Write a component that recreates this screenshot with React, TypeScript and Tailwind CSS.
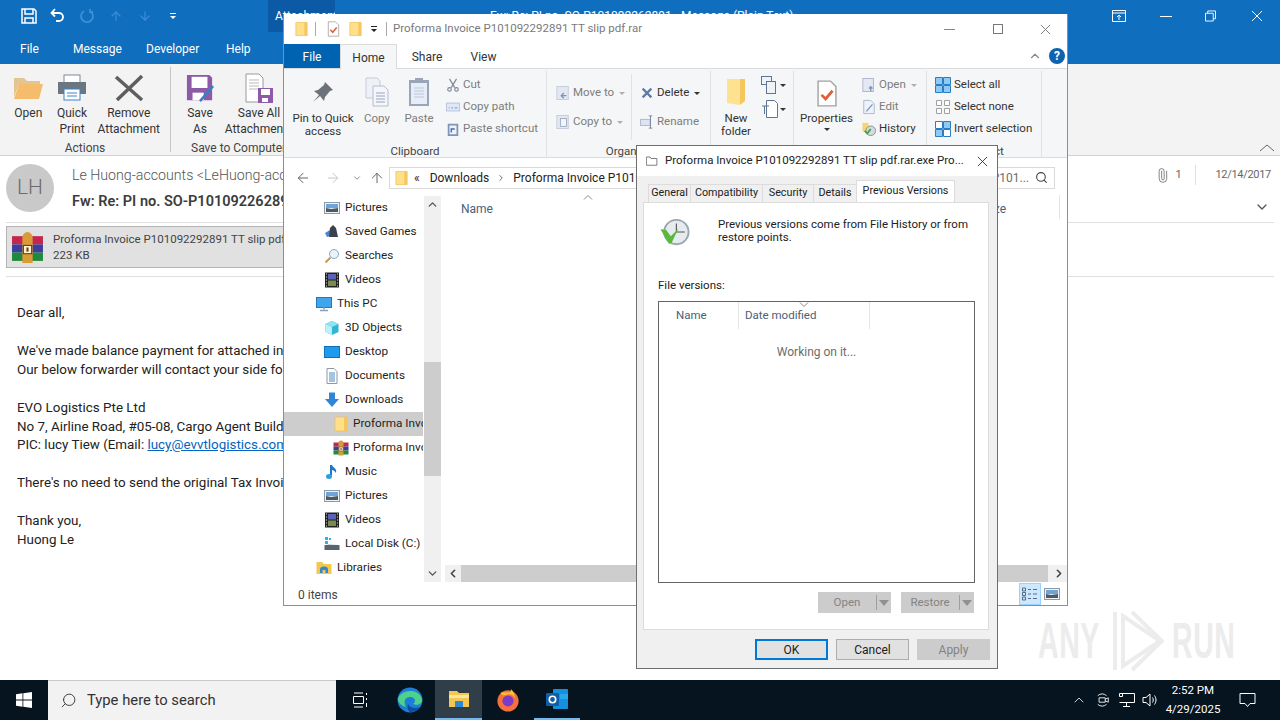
import type { ReactNode } from 'react';
import { ArrowLeft, ArrowRight, ArrowUp, ChevronDown, ChevronLeft, ChevronRight, ChevronUp, Paperclip, Search } from 'lucide-react';

const FolderIcon = ({ className = 'w-4 h-4' }: { className?: string }) => (
    <svg viewBox="0 0 16 16" className={className}>
        <path d="M2 1h12v14H2z" fill="#ffdf8a" stroke="#eec35c" strokeWidth="0.8" />
        <path d="M11 1h3v14h-3z" fill="#f5c85f" />
    </svg>
);

const CheckDoc = ({ className = 'w-4 h-4' }: { className?: string }) => (
    <svg viewBox="0 0 16 20" className={className}>
        <path d="M1.5 1h9l4 4v14h-13z" fill="#fff" stroke="#a0a0a0" />
        <path d="M4 11l3 3 5-6" fill="none" stroke="#e0603a" strokeWidth="2" />
    </svg>
);

const RarIcon = ({ className = 'w-4 h-4' }: { className?: string }) => (
    <svg viewBox="0 0 32 32" className={className}>
        <rect x="1" y="5" width="30" height="8" fill="#c4264e" />
        <rect x="1" y="13" width="30" height="8" fill="#3a3f9e" />
        <rect x="1" y="21" width="30" height="8" fill="#1f8a3c" />
        <path d="M11 7a5 6 0 0110 0v24H11z" fill="#d99a38" />
        <rect x="12" y="14" width="8" height="8" fill="#fff3d0" stroke="#6a3a10" />
        <rect x="15" y="16" width="2" height="4" fill="#6a3a10" />
    </svg>
);

const PicturesIcon = () => (
    <svg viewBox="0 0 16 16" className="w-4 h-4">
        <rect x="0.5" y="2.5" width="15" height="11" fill="#eef3f8" stroke="#8c9aa8" />
        <rect x="2" y="4" width="12" height="4" fill="#6fa4d8" />
        <path d="M2 8l5 1 7-1v4H2z" fill="#4d5a66" />
    </svg>
);

const VideosIcon = () => (
    <svg viewBox="0 0 16 16" className="w-4 h-4">
        <rect x="1" y="0.5" width="14" height="15" fill="#222" />
        <rect x="4" y="2" width="8" height="5.5" fill="#5a62b8" />
        <rect x="4" y="8.5" width="8" height="5.5" fill="#7a8a50" />
        <path d="M2 2h1M2 5h1M2 8h1M2 11h1M2 14h1M13 2h1M13 5h1M13 8h1M13 11h1M13 14h1" stroke="#ddd" />
    </svg>
);

const SavedGamesIcon = () => (
    <svg viewBox="0 0 16 16" className="w-4 h-4">
        <path d="M1 9l5-3v6l-3 1z" fill="#4d86d0" />
        <path d="M6 4l3-3 3 3 2 9H5z" fill="#3a4250" />
    </svg>
);

const SearchesIcon = () => (
    <svg viewBox="0 0 16 16" className="w-4 h-4">
        <circle cx="10" cy="6" r="4.5" fill="#eaf3fb" stroke="#8aa8c4" />
        <path d="M6.5 9.5L1.5 14.5" stroke="#c09a60" strokeWidth="2" />
    </svg>
);

const ThisPcIcon = () => (
    <svg viewBox="0 0 16 16" className="w-4 h-4">
        <rect x="0.5" y="1.5" width="15" height="10" fill="#3fa6ee" stroke="#2179c0" />
        <path d="M4 14.5h8" stroke="#8aa0b0" strokeWidth="1.5" />
        <path d="M7 11.5h2v2H7z" fill="#9ab" />
    </svg>
);

const ObjectsIcon = () => (
    <svg viewBox="0 0 16 16" className="w-4 h-4">
        <path d="M8 1l6.5 3v8L8 15l-6.5-3V4z" fill="#2fb5d6" />
        <path d="M8 1l6.5 3L8 7 1.500 4z" fill="#8ae6f2" />
        <path d="M1.500 4L8 7v8l-6.500-3z" fill="#bdf0f6" />
    </svg>
);

const DesktopIcon = () => (
    <svg viewBox="0 0 16 16" className="w-4 h-4">
        <rect x="0.5" y="2.500" width="15" height="11" fill="#1c9bef" stroke="#116fb8" />
    </svg>
);

const DocumentsIcon = () => (
    <svg viewBox="0 0 16 16" className="w-4 h-4">
        <path d="M3 0.500h7l3 3v12H3z" fill="#fff" stroke="#8a9aa8" />
        <path d="M5 5h6M5 7h6M5 9h6M5 11h6M5 13h6" stroke="#4b88c4" />
    </svg>
);

const DownloadsIcon = () => (
    <svg viewBox="0 0 16 16" className="w-4 h-4">
        <path d="M5 0.500h6V7h4l-7 8-7-8h4z" fill="#2f86d6" />
    </svg>
);

const MusicIcon = () => (
    <svg viewBox="0 0 16 16" className="w-4 h-4">
        <path d="M7 1v10.500" stroke="#2277c8" strokeWidth="2" />
        <ellipse cx="5" cy="12.500" rx="3" ry="2.500" fill="#2aa0e0" />
        <path d="M8 1c1 3 5 3 4 8-1-2-3-3-4-3z" fill="#2277c8" />
    </svg>
);

const DiskIcon = () => (
    <svg viewBox="0 0 16 16" className="w-4 h-4">
        <rect x="0.500" y="9" width="15" height="5" fill="#5a6470" />
        <path d="M1 1h3v3H1zM5 2h2v2H5zM1 5h3v3H1z" fill="#29b3e8" />
        <path d="M5 8l9 1H2z" fill="#c9d2d8" />
    </svg>
);

const LibrariesIcon = () => (
    <svg viewBox="0 0 16 16" className="w-4 h-4">
        <path d="M0.500 2h6l1 2h8v10H0.500z" fill="#f3c851" />
        <path d="M4 13V9.500a4 3 0 018 0V13h-2.500v-3h-3v3z" fill="#3187d0" />
    </svg>
);

function NavRow({ label, icon, className, gap = 'gap-[5px]', selected }: { label: string; icon: ReactNode; className: string; gap?: string; selected?: boolean }) {
    return (
        <div className={`flex items-center h-6 whitespace-nowrap ${gap} ${className} ${selected ? 'bg-[#cdcdcd]' : ''}`}>
            <span className="shrink-0 flex">{icon}</span>
            <span className="text-[#1e1e1e]">{label}</span>
        </div>
    );
}

function SmallAction({ icon, label, disabled, caret, wide }: { icon: ReactNode; label: string; disabled?: boolean; caret?: 'gray' | 'dark'; wide?: boolean }) {
    return (
        <div className="flex items-center gap-[3px] whitespace-nowrap h-[22px]">
            <span className={`h-[16px] flex shrink-0 ${wide ? 'w-[16px]' : 'w-[14px]'}`}>{icon}</span>
            <span className={disabled ? 'text-[#7d7d7d]' : 'text-[#333]'}>{label}</span>
            {caret === 'gray' && <span className="ml-[2px] w-0 h-0 border-x-[3px] border-x-transparent border-t-[3px] border-t-[#b0b0b0]" />}
            {caret === 'dark' && <span className="ml-[2px] w-0 h-0 border-x-[3px] border-x-transparent border-t-[3px] border-t-[#333]" />}
        </div>
    );
}

function BigAction({ icon, label, className = '', disabled }: { icon: ReactNode; label: ReactNode; className?: string; disabled?: boolean }) {
    return (
        <div className={`flex flex-col items-center text-center leading-[13px] ${className} ${disabled ? 'text-[#7d7d7d]' : 'text-[#333]'}`}>
            <div className="h-[41px] flex items-center justify-center">{icon}</div>
            {label}
        </div>
    );
}

function RibbonGroup({ label, className, children }: { label: string; className: string; children: ReactNode }) {
    return (
        <div className={`flex flex-col shrink-0 h-[87px] border-r border-[#e1e2e3] ${className}`}>
            <div className="flex-1 min-h-0">{children}</div>
            <div className="text-center text-[#444] leading-[14px] whitespace-nowrap">{label}</div>
        </div>
    );
}

function OutlookRibbon() {
    return (
        <div className="h-[92px] bg-[#f3f3f3] border-b border-[#d2d2d2] flex text-[12px] text-[#333] shrink-0 relative">
            <div className="w-[171px] h-[85px] mt-[3px] border-r border-[#c6c6c6] flex flex-col">
                <div className="flex flex-1 pt-[5px]">
                    <div className="w-[57px] flex flex-col items-center leading-[16px]">
                        <svg viewBox="0 0 30 26" className="w-[30px] h-[28px] mt-[2px] mb-[3px]">
                            <path d="M1 3h10l3 3h13v3H6L1 22z" fill="#e2c590" />
                            <path d="M6 9h24l-4 15H1z" fill="#f5bd6b" />
                        </svg>
                        Open
                    </div>
                    <div className="w-[31px] flex flex-col items-center leading-[16px] text-center">
                        <svg viewBox="0 0 30 28" className="w-[30px] h-[28px] mt-[2px] mb-[3px]">
                            <rect x="7" y="1" width="16" height="9" fill="#fff" stroke="#7c8893" />
                            <rect x="1" y="8" width="28" height="12" fill="#6c7680" />
                            <rect x="7" y="15" width="16" height="11" fill="#fff" stroke="#3b84c9" />
                            <path d="M10 19h10M10 22h10" stroke="#3b84c9" />
                        </svg>
                        Quick Print
                    </div>
                    <div className="w-[83px] flex flex-col items-center leading-[16px] text-center">
                        <svg viewBox="0 0 30 28" className="w-[30px] h-[28px] mt-[2px] mb-[3px]">
                            <path d="M2 3l26 23M28 2L3 26" stroke="#5e5e5e" strokeWidth="3.500" fill="none" />
                        </svg>
                        Remove Attachment
                    </div>
                </div>
                <div className="text-center leading-[16px] text-[#444] -mb-[4px]">Actions</div>
            </div>
            <div className="flex flex-col flex-1 h-[85px] mt-[3px]">
                <div className="flex flex-1 pt-[5px]">
                    <div className="w-[58px] flex flex-col items-center leading-[16px] text-center">
                        <svg viewBox="0 0 30 30" className="w-[30px] h-[28px] mt-[2px] mb-[3px]">
                            <path d="M1 1h24l3 3v24H1z" fill="#8d5aa8" />
                            <rect x="6" y="3" width="17" height="12" fill="#fff" />
                            <rect x="7" y="20" width="12" height="8" fill="#fff" />
                            <path d="M14 28l14-16 2 2-14 16z" fill="#3a7ec2" />
                        </svg>
                        <span>Save</span>
                        <span>As</span>
                    </div>
                    <div className="w-[60px] flex flex-col items-center leading-[16px] text-center whitespace-nowrap">
                        <svg viewBox="0 0 30 30" className="w-[30px] h-[30px] mt-[1px] mb-[2px]">
                            <path d="M2 1h13l4 4v24H2z" fill="#fff" stroke="#9a9a9a" />
                            <path d="M5 7h10M5 10h10M5 13h10M5 16h10" stroke="#bbb" />
                            <rect x="14" y="15" width="15" height="15" fill="#8d5aa8" />
                            <rect x="17" y="16" width="9" height="6" fill="#fff" />
                            <rect x="18" y="25" width="6" height="4" fill="#fff" />
                        </svg>
                        <span>Save All</span>
                        <span>Attachments</span>
                    </div>
                </div>
                <div className="leading-[16px] text-[#444] pl-[20px] whitespace-nowrap -mb-[4px]">Save to Computer</div>
            </div>
            <svg viewBox="0 0 16 8" className="absolute right-[5px] bottom-[3px] w-[16px] h-[8px]" fill="none" stroke="#666"><path d="M1 7l7-6 7 6" /></svg>
        </div>
    );
}

function OutlookWindow() {
    return (
        <div className="h-[680px] flex flex-col bg-white relative">
            <div className="h-[32px] bg-[#106ebe] flex items-center text-white shrink-0">
                <div className="flex items-center pl-[21px] gap-[13px] w-[268px]">
                    <svg viewBox="0 0 16 16" className="w-4 h-4" fill="none" stroke="#fff" strokeWidth="1.500">
                        <path d="M1 1h12l2 2v12H1z" /><path d="M4 1v5h8V1M4 15v-5h8v5" />
                    </svg>
                    <svg viewBox="0 0 16 16" className="w-4 h-4" fill="none" stroke="#fff" strokeWidth="1.800">
                        <path d="M5 1L1.500 5 5 8.500" /><path d="M2 5h7a4 4 0 010 8H6" />
                    </svg>
                    <svg viewBox="0 0 16 16" className="w-4 h-4" fill="none" stroke="#3d8fd6" strokeWidth="1.800">
                        <path d="M11 3a6 6 0 11-6 0M11 1v3h3" />
                    </svg>
                    <ArrowUp className="w-[14px] h-[14px] text-[#3d8fd6] ml-[1px]" />
                    <ArrowUp className="w-[14px] h-[14px] text-[#3d8fd6] rotate-180 ml-[2px]" />
                    <svg viewBox="0 0 8 8" className="w-2 h-2 ml-[4px]" fill="#fff"><path d="M1 1h6v1H1zM1 4h6L4 7z" /></svg>
                </div>
                <div className="w-[67px] h-full bg-[#0c5aa6] text-[12px] pl-[7px] flex items-center whitespace-nowrap overflow-hidden">Attachment Tools</div>
                <div className="flex-1 text-[12px] pl-[155px] whitespace-nowrap">Fw: Re: PI no. SO-P101092262891 - Message (Plain Text)</div>
                <div className="flex items-center text-white">
                    <svg viewBox="0 0 14 12" className="w-[14px] h-[12px] mr-[34px]" fill="none" stroke="#fff"><path d="M0.500 0.500h13v11h-13zM0.500 3h13M7 10V5M5 7l2-2 2 2" /></svg>
                    <span className="w-[12px] h-px bg-white mr-[33px]" />
                    <svg viewBox="0 0 12 12" className="w-[11px] h-[12px] mr-[35px]" fill="none" stroke="#fff"><path d="M0.500 3h8.500v8.500H0.500zM3 3V0.500h8.500V9H9" /></svg>
                    <svg viewBox="0 0 12 12" className="w-[12px] h-[12px] mr-[17px]" stroke="#fff"><path d="M1 1l10 10M11 1L1 11" /></svg>
                </div>
            </div>
            <div className="h-[32px] bg-[#106ebe] flex items-center text-white text-[12px] shrink-0 pt-[2px]">
                <span className="pl-[20px] w-[73px]">File</span>
                <span className="w-[73px]">Message</span>
                <span className="w-[80px]">Developer</span>
                <span>Help</span>
            </div>
            <OutlookRibbon />
            <div className="flex items-start h-[67px] mx-[6px] border-b border-[#e0e0e0] shrink-0">
                <div className="w-[48px] h-[48px] mt-[8px] rounded-full bg-[#c9c9c9] text-[#6b6b6b] text-[21px] font-light flex items-center justify-center shrink-0">LH</div>
                <div className="ml-[18px] w-[212px] overflow-hidden whitespace-nowrap">
                    <div className="text-[#555] font-light mt-[9px] leading-[20px] text-[14.200px]">Le Huong-accounts &lt;LeHuong-accounts@evvtlogistics.com&gt;</div>
                    <div className="text-[#3c3c3c] font-semibold mt-[7px] leading-[20px] text-[14.500px]">Fw: Re: PI no. SO-P101092262891</div>
                </div>
                <div className="ml-auto mr-[3px] mt-[7px] flex flex-col items-end text-[#666] text-[11px] tracking-[-0.3px]">
                    <div className="flex items-center h-[24px]">
                        <Paperclip className="w-[15px] h-[15px] -rotate-45" strokeWidth={1.200} />
                        <span className="ml-[6px]">1</span>
                        <span className="w-px h-[20px] bg-[#e0e0e0] ml-[14px] mr-[19px]" />
                        <span>12/14/2017</span>
                    </div>
                    <ChevronDown className="w-[16px] h-[16px] mt-[12px] mr-[1px] text-[#555]" strokeWidth={2} />
                </div>
            </div>
            <div className="mx-[6px] h-[54px] border-b border-[#e0e0e0] pt-[3px] shrink-0">
                <div className="h-[42px] w-[400px] bg-[#e1e1e1] border border-[#b4b4b4] flex items-center pl-[4px] text-[11.500px] text-[#444]">
                    <RarIcon className="w-[33px] h-[33px]" />
                    <div className="ml-[9px] leading-[16px] whitespace-nowrap">
                        <div>Proforma Invoice P101092292891 TT slip pdf.rar</div>
                        <div>223 KB</div>
                    </div>
                </div>
            </div>
            <div className="pl-[17px] pt-[26px] text-[13.400px] leading-[19px] text-[#222] whitespace-nowrap">
                <p>Dear all,</p>
                <p className="mt-[19px]">We've made balance payment for attached invoice.</p>
                <p>Our below forwarder will contact your side for shipment.</p>
                <p className="mt-[19px]">EVO Logistics Pte Ltd</p>
                <p>No 7, Airline Road, #05-08, Cargo Agent Building</p>
                <p className="-mt-px">PIC: lucy Tiew (Email: <span className="text-[#0563c1] underline">lucy@evvtlogistics.com</span>)</p>
                <p className="mt-[19px]">There's no need to send the original Tax Invoice.</p>
                <p className="mt-[19px]">Thank you,</p>
                <p>Huong Le</p>
            </div>
        </div>
    );
}

function ExplorerRibbon() {
    return (
        <div className="h-[90px] bg-[#f5f6f7] border-y border-[#dadbdc] flex text-[11.500px] pt-[2px] shrink-0">
            <RibbonGroup label="Clipboard" className="w-[263px]">
                <div className="flex h-full">
                    <BigAction className="w-[78px]" label={<>Pin to Quick<br />access</>} icon={
                        <svg viewBox="0 0 24 24" className="w-[24px] h-[24px]" fill="#6d7278"><path d="M14 2l8 8-3 1-5 6-1 4-4-5-7 6 6-7-5-4 4-1 6-5z" /></svg>
                    } />
                    <BigAction className="w-[30px]" disabled label="Copy" icon={
                        <svg viewBox="0 0 24 30" className="w-[24px] h-[30px]">
                            <path d="M1 1h11l3 3v17H1z" fill="#eef1f8" stroke="#c6cbd8" />
                            <path d="M8 9h11l4 4v16H8z" fill="#f4f6fb" stroke="#b5bccb" />
                            <path d="M11 16h9M11 19h9M11 22h9M11 25h9" stroke="#98a6c0" />
                        </svg>
                    } />
                    <BigAction className="w-[54px]" disabled label="Paste" icon={
                        <svg viewBox="0 0 22 30" className="w-[22px] h-[30px]">
                            <rect x="1" y="3" width="20" height="26" fill="#9aa5b8" />
                            <rect x="3" y="6" width="16" height="21" fill="#e7edf8" />
                            <rect x="7" y="1" width="8" height="5" fill="#9aa5b8" />
                            <path d="M6 11h10M6 14h10M6 17h10M6 20h10" stroke="#bcc7dc" />
                        </svg>
                    } />
                    <div className="mt-[3px] flex flex-col">
                        <SmallAction disabled label="Cut" icon={
                            <svg viewBox="0 0 16 16" fill="none" stroke="#7b8796" strokeWidth="1.300"><path d="M4 1l6 10M12 1L6 11" /><circle cx="4" cy="13" r="2" /><circle cx="12" cy="13" r="2" /></svg>
                        } />
                        <SmallAction disabled label="Copy path" icon={
                            <svg viewBox="0 0 16 16"><rect x="0.500" y="3.500" width="15" height="9" fill="#dfe8f6" stroke="#b3c0d6" /><path d="M3 9h1M6 9h2M10 9h3" stroke="#6f8bb8" /></svg>
                        } />
                        <SmallAction disabled label="Paste shortcut" icon={
                            <svg viewBox="0 0 16 16"><rect x="2" y="2" width="12" height="14" fill="#7f94b8" /><rect x="4" y="4" width="8" height="10" fill="#eef2f9" /><path d="M6 12V8h4" fill="none" stroke="#3f6cb0" strokeWidth="1.500" /></svg>
                        } />
                    </div>
                </div>
            </RibbonGroup>
            <RibbonGroup label="Organize" className="w-[164px]">
                <div className="flex h-full pt-[11px]">
                    <div className="w-[85px] pl-[9px] -mt-[8px] pt-[8px] flex flex-col gap-[7px] border-r border-[#e1e2e3] h-[66px]">
                        <SmallAction disabled caret="gray" label="Move to" icon={
                            <svg viewBox="0 0 16 16"><rect x="1" y="0.500" width="13" height="15" fill="#e3e8f2" stroke="#c3cad8" /><path d="M12 11H6m3-3l-3 3 3 3" fill="none" stroke="#7d93ba" strokeWidth="1.500" /></svg>
                        } />
                        <SmallAction disabled caret="gray" label="Copy to" icon={
                            <svg viewBox="0 0 16 16"><rect x="1" y="0.500" width="13" height="15" fill="#e3e8f2" stroke="#c3cad8" /><rect x="5" y="4" width="7" height="9" fill="#f3f5fa" stroke="#9aa6bd" /></svg>
                        } />
                    </div>
                    <div className="pl-[8px] flex flex-col gap-[7px]">
                        <SmallAction caret="dark" label="Delete" icon={
                            <svg viewBox="0 0 16 16" stroke="#5d7aa5" strokeWidth="2.500"><path d="M3 3l10 10M13 3L3 13" /></svg>
                        } />
                        <SmallAction disabled label="Rename" icon={
                            <svg viewBox="0 0 16 16"><rect x="0.500" y="5" width="11" height="7" fill="#dce4f2" stroke="#aab6cc" /><path d="M12 1v14M10 1h4M10 15h4" stroke="#6f7f98" /></svg>
                        } />
                    </div>
                </div>
            </RibbonGroup>
            <RibbonGroup label="New" className="w-[83px]">
                <div className="flex h-full">
                    <BigAction className="w-[50px]" label={<>New<br />folder</>} icon={
                        <svg viewBox="0 0 20 28" className="w-[20px] h-[28px]"><path d="M1 1h18v22l-6 4-12-2z" fill="#ffe28f" /><path d="M14 1h5v22l-5 4z" fill="#f5c85f" /></svg>
                    } />
                    <div className="flex flex-col gap-[2px] pt-[3px]">
                        <div className="h-[22px] flex items-center">
                            <svg viewBox="0 0 18 18" className="w-[18px] h-[18px]" fill="#eef2f9" stroke="#60758f"><rect x="0.500" y="0.500" width="10" height="8" /><rect x="5.500" y="5.500" width="9" height="12" /></svg>
                            <span className="ml-[1px] w-0 h-0 border-x-[3px] border-x-transparent border-t-[3px] border-t-[#333]" />
                        </div>
                        <div className="h-[22px] flex items-center">
                            <svg viewBox="0 0 18 18" className="w-[18px] h-[18px]" fill="#fff" stroke="#60758f"><path d="M5.500 0.500h8l3 3v14h-11zM1 6h7M3.500 6v8" /></svg>
                            <span className="ml-[1px] w-0 h-0 border-x-[3px] border-x-transparent border-t-[3px] border-t-[#333]" />
                        </div>
                    </div>
                </div>
            </RibbonGroup>
            <RibbonGroup label="Open" className="w-[133px]">
                <div className="flex h-full">
                    <div className="w-[65px] flex flex-col items-center text-[#333] leading-[13px]">
                        <div className="h-[41px] flex items-center pt-[4px]"><CheckDoc className="w-[22px] h-[29px]" /></div>
                        Properties
                        <span className="mt-[3px] w-0 h-0 border-x-[3px] border-x-transparent border-t-[3px] border-t-[#333]" />
                    </div>
                    <div className="mt-[3px] pl-[3px] flex flex-col">
                        <SmallAction disabled caret="gray" label="Open" icon={
                            <svg viewBox="0 0 16 16"><rect x="1" y="0.500" width="12" height="15" fill="#e3e8f2" stroke="#a8b3c6" /><path d="M10 15v-5m-2 2l2-2 2 2" fill="none" stroke="#7d93ba" strokeWidth="1.500" /></svg>
                        } />
                        <SmallAction disabled label="Edit" icon={
                            <svg viewBox="0 0 16 16"><path d="M2 0.500h8l4 4v11H2z" fill="#eef2f9" stroke="#a8b3c6" /><path d="M5 13l7-8" stroke="#7d93ba" strokeWidth="1.500" /></svg>
                        } />
                        <SmallAction label="History" icon={
                            <svg viewBox="0 0 16 16"><path d="M0.500 1h7v10h-7z" fill="#f5d66e" /><circle cx="10" cy="10" r="5.500" fill="#d5dadf" stroke="#808a94" /><path d="M3 10l3 3 4-5" fill="none" stroke="#3aa33a" strokeWidth="2" /></svg>
                        } />
                    </div>
                </div>
            </RibbonGroup>
            <RibbonGroup label="Select" className="w-[115px] pl-[8px]">
                <div className="mt-[3px] flex flex-col">
                    <SmallAction wide label="Select all" icon={
                        <svg viewBox="0 0 16 16" fill="#8fcaf5" stroke="#2a7fc4"><path d="M0.500 0.500h7v7h-7zM8.500 0.500h7v7h-7zM0.500 8.500h7v7h-7zM8.500 8.500h7v7h-7z" /></svg>
                    } />
                    <SmallAction wide label="Select none" icon={
                        <svg viewBox="0 0 16 16" fill="#fff" stroke="#a0a0a0"><path d="M1.500 1.500h5v5h-5zM9.500 1.500h5v5h-5zM1.500 9.500h5v5h-5zM9.500 9.500h5v5h-5z" /></svg>
                    } />
                    <SmallAction wide label="Invert selection" icon={
                        <svg viewBox="0 0 16 16" stroke="#2a7fc4"><path d="M0.500 8.500h7v7h-7zM8.500 0.500h7v7h-7z" fill="#8fcaf5" /><path d="M0.500 0.500h7v7h-7zM8.500 8.500h7v7h-7z" fill="#fff" /></svg>
                    } />
                </div>
            </RibbonGroup>
            <div className="flex-1" />
        </div>
    );
}

function ExplorerWindow() {
    return (
        <div className="absolute left-[283px] top-[14px] w-[785px] h-[592px] bg-white border border-[#8e8e8e] border-t-0 flex flex-col text-[12px]">
            <div className="h-[30px] flex items-center shrink-0">
                <FolderIcon className="w-[15px] h-[16px] ml-[10px]" />
                <span className="w-px h-[14px] bg-[#aaa] ml-[6px]" />
                <CheckDoc className="w-[13px] h-[16px] ml-[11px]" />
                <FolderIcon className="w-[15px] h-[16px] ml-[8px]" />
                <svg viewBox="0 0 8 8" className="w-2 h-2 ml-[7px]" fill="#222"><path d="M1 1h6v1H1zM1 4h6L4 7z" /></svg>
                <span className="w-px h-[14px] bg-[#aaa] ml-[8px]" />
                <span className="ml-[6px] text-[11.500px] text-[#7a7a7a] whitespace-nowrap">Proforma Invoice P101092292891 TT slip pdf.rar</span>
                <div className="ml-auto flex items-center">
                    <span className="w-[11px] h-px bg-[#888] mr-[38px]" />
                    <span className="w-[10px] h-[10px] border border-[#777] mr-[37px]" />
                    <svg viewBox="0 0 12 12" className="w-[11px] h-[11px] mr-[16px]" stroke="#777"><path d="M1 1l10 10M11 1L1 11" /></svg>
                </div>
            </div>
            <div className="h-[24px] flex items-stretch shrink-0 relative">
                <div className="w-[56px] bg-[#0063b1] text-white flex items-center justify-center pt-[2px]">File</div>
                <div className="w-[57px] h-[25px] z-10 bg-[#f5f6f7] border-x border-t border-[#dadbdc] text-[#333] flex items-center justify-center pt-[2px]">Home</div>
                <div className="w-[58px] ml-px text-[#333] flex items-center justify-center pt-[2px]">Share</div>
                <div className="w-[57px] -ml-px text-[#333] flex items-center justify-center pt-[2px]">View</div>
                <div className="ml-auto flex items-center mr-[2px]">
                    <ChevronUp className="w-[14px] h-[14px] text-[#888] mr-[7px]" />
                    <span className="w-[16px] h-[16px] rounded-full bg-[#0f62b0] text-white text-[12px] font-bold flex items-center justify-center">?</span>
                </div>
            </div>
            <ExplorerRibbon />
            <div className="h-[37px] flex items-center shrink-0 text-[#222] pt-[2px]">
                <ArrowLeft className="w-[16px] h-[16px] ml-[11px] text-[#666]" strokeWidth={1.500} />
                <ArrowRight className="w-[16px] h-[16px] ml-[14px] text-[#c8c8c8]" strokeWidth={1.500} />
                <ChevronDown className="w-[10px] h-[10px] ml-[11px] text-[#777]" strokeWidth={2} />
                <ArrowUp className="w-[16px] h-[16px] ml-[7px] text-[#666]" strokeWidth={1.500} />
                <div className="ml-[4px] w-[666px] h-[22px] border border-[#d9d9d9] flex items-center pl-[4px] pr-[6px] whitespace-nowrap">
                    <FolderIcon className="w-[15px] h-[18px]" />
                    <span className="ml-[5px]">«</span>
                    <span className="ml-[10px]">Downloads</span>
                    <ChevronRight className="w-[10px] h-[10px] mx-[7px] text-[#555]" />
                    <span>Proforma Invoice P101092292891 TT slip pdf.rar</span>
                    <span className="ml-auto text-[#6d6d6d]">P101...</span>
                    <Search className="w-[13px] h-[13px] ml-[6px] text-[#444]" strokeWidth={2} />
                </div>
            </div>
            <div className="flex-1 min-h-0 flex">
                <div className="w-[139px] overflow-hidden shrink-0 pt-px text-[11.750px]">
                    <NavRow className="pl-[40px]" label="Pictures" icon={<PicturesIcon />} />
                    <NavRow className="pl-[40px]" label="Saved Games" icon={<SavedGamesIcon />} />
                    <NavRow className="pl-[40px]" label="Searches" icon={<SearchesIcon />} />
                    <NavRow className="pl-[40px]" label="Videos" icon={<VideosIcon />} />
                    <NavRow className="pl-[32px]" label="This PC" icon={<ThisPcIcon />} />
                    <NavRow className="pl-[40px]" label="3D Objects" icon={<ObjectsIcon />} />
                    <NavRow className="pl-[40px]" label="Desktop" icon={<DesktopIcon />} />
                    <NavRow className="pl-[40px]" label="Documents" icon={<DocumentsIcon />} />
                    <NavRow className="pl-[40px]" label="Downloads" icon={<DownloadsIcon />} />
                    <NavRow className="pl-[49px]" gap="gap-[4px]" selected label="Proforma Invoice P101092292891" icon={<FolderIcon />} />
                    <NavRow className="pl-[49px]" gap="gap-[4px]" label="Proforma Invoice P101092292891" icon={<RarIcon />} />
                    <NavRow className="pl-[40px]" label="Music" icon={<MusicIcon />} />
                    <NavRow className="pl-[40px]" label="Pictures" icon={<PicturesIcon />} />
                    <NavRow className="pl-[40px]" label="Videos" icon={<VideosIcon />} />
                    <NavRow className="pl-[40px]" label="Local Disk (C:)" icon={<DiskIcon />} />
                    <NavRow className="pl-[32px]" label="Libraries" icon={<LibrariesIcon />} />
                </div>
                <div className="w-[17px] ml-px mt-px bg-[#f0f0f0] flex flex-col items-center shrink-0 h-[386px]">
                    <ChevronUp className="w-[13px] h-[17px] text-[#555] shrink-0" strokeWidth={2.500} />
                    <div className="h-[149px] shrink-0" />
                    <div className="h-[114px] w-full bg-[#cdcdcd] shrink-0" />
                    <div className="flex-1" />
                    <ChevronDown className="w-[13px] h-[17px] text-[#555] shrink-0" strokeWidth={2.500} />
                </div>
                <div className="flex-1 ml-[4px] flex flex-col min-w-0">
                    <div className="flex-1 flex items-start text-[#4c607a]">
                        <span className="ml-[16px] mt-[5px]">Name</span>
                        <svg viewBox="0 0 10 5" className="w-[10px] h-[5px] ml-[90px]" fill="none" stroke="#888"><path d="M1 4.500l4-4 4 4" /></svg>
                        <span className="ml-auto mt-[5px]">Size</span>
                        <span className="w-px h-[24px] bg-[#e5e5e5] ml-[53px] mr-[7px]" />
                    </div>
                    <div className="h-[17px] bg-[#f0f0f0] flex items-center shrink-0 mb-px">
                        <ChevronLeft className="w-[16px] h-[13px] text-[#444]" strokeWidth={3} />
                        <div className="h-full w-[587px] bg-[#cdcdcd]" />
                        <ChevronRight className="w-[16px] h-[13px] ml-[3px] text-[#444]" strokeWidth={3} />
                    </div>
                </div>
            </div>
            <div className="h-[22px] flex items-center shrink-0 text-[#444] pt-[2px]">
                <span className="pl-[14px]">0 items</span>
                <div className="ml-auto flex items-center mr-[7px] -mt-[2px]">
                    <span className="w-[22px] h-[22px] bg-[#cce8ff] border border-[#99d1ff] flex items-center justify-center">
                        <svg viewBox="0 0 16 14" className="w-[16px] h-[14px]" fill="none" stroke="#5a6a80"><path d="M0.500 1h3v3h-3zM0.500 5.500h3v3h-3zM0.500 10h3v3h-3zM6 2.500h3M11 2.500h4M6 7h3M11 7h4M6 11.500h3M11 11.500h4" /></svg>
                    </span>
                    <span className="ml-[3px] flex"><PicturesIcon /></span>
                </div>
            </div>
        </div>
    );
}

function SplitButton({ label }: { label: string }) {
    return (
        <div className="h-[21px] w-[73px] bg-[#cccccc] text-[#838383] flex items-center">
            <span className="flex-1 text-center">{label}</span>
            <span className="w-px h-[15px] bg-[#9f9f9f]" />
            <span className="w-[14px] flex justify-center">
                <span className="w-0 h-0 border-x-[5px] border-x-transparent border-t-[6px] border-t-[#909090]" />
            </span>
        </div>
    );
}

function PropertiesDialog() {
    const tabs = [
        { label: 'General', width: 'w-[43px]' },
        { label: 'Compatibility', width: 'w-[73px]' },
        { label: 'Security', width: 'w-[52px]' },
        { label: 'Details', width: 'w-[44px]' },
    ];
    return (
        <div className="absolute left-[636px] top-[145px] w-[362px] h-[524px] bg-[#f0f0f0] border border-[#6e6e6e] flex flex-col text-[11.500px] text-[#222]">
            <div className="h-[30px] bg-white flex items-center shrink-0 pl-[9px]">
                <svg viewBox="0 0 16 14" className="w-[12px] h-[11px]" fill="#fff" stroke="#555"><path d="M0.500 1h5l1 2h8v9h-14z" /></svg>
                <span className="ml-[7px] whitespace-nowrap">Proforma Invoice P101092292891 TT slip pdf.rar.exe Pro...</span>
                <svg viewBox="0 0 12 12" className="w-[11px] h-[11px] ml-auto mr-[9px]" stroke="#333"><path d="M1 1l10 10M11 1L1 11" /></svg>
            </div>
            <div className="h-[26px] flex items-end pl-[12px] shrink-0 text-[10.750px]">
                {tabs.map((t) => (
                    <div key={t.label} className={`${t.width} h-[18px] border border-b-0 border-[#dcdcdc] -ml-px bg-[#f0f0f0] flex items-center justify-center whitespace-nowrap`}>{t.label}</div>
                ))}
                <div className="w-[99px] h-[22px] bg-white border border-b-0 border-[#dcdcdc] -ml-px flex items-center justify-center whitespace-nowrap">Previous Versions</div>
            </div>
            <div className="mx-[6px] w-[346px] h-[428px] bg-white border border-[#dcdcdc] pl-[14px] pr-[14px] shrink-0">
                <div className="flex items-start pt-[14px] h-[75px]">
                    <svg viewBox="0 0 32 32" className="w-[33px] h-[30px] shrink-0">
                        <circle cx="18" cy="16" r="13" fill="#e6ebee" stroke="#9aa6ae" strokeWidth="2" />
                        <path d="M18 7v9h9" fill="none" stroke="#555" strokeWidth="1.200" />
                        <path d="M1 13l6 .5 5 7 8-8-7 15-3 1z" fill="#58b93c" />
                    </svg>
                    <p className="ml-[27px] leading-[13px] pt-px">Previous versions come from File History or from restore points.</p>
                </div>
                <div className="mb-[9px] leading-[14px]">File versions:</div>
                <div className="h-[282px] w-[317px] border border-[#646464] flex flex-col">
                    <div className="h-[27px] flex text-[#4c607a] shrink-0 relative">
                        <span className="w-[80px] pl-[17px] border-r border-[#e5e5e5] flex items-center">Name</span>
                        <span className="w-[131px] pl-[6px] border-r border-[#e5e5e5] flex items-center">Date modified</span>
                        <svg viewBox="0 0 10 5" className="absolute left-[140px] top-0 w-[10px] h-[5px]" fill="none" stroke="#888"><path d="M1 .5l4 4 4-4" /></svg>
                    </div>
                    <div className="text-center text-[#6d6d6d] mt-[14px] text-[12px]">Working on it...</div>
                </div>
                <div className="flex justify-end gap-[10px] mt-[9px]">
                    <SplitButton label="Open" />
                    <SplitButton label="Restore" />
                </div>
            </div>
            <div className="flex justify-end gap-[8px] pr-[7px] mt-[9px] text-[12px]">
                <div className="w-[73px] h-[21px] bg-[#e1e1e1] border-2 border-[#0078d7] flex items-center justify-center">OK</div>
                <div className="w-[73px] h-[21px] bg-[#e1e1e1] border border-[#adadad] flex items-center justify-center">Cancel</div>
                <div className="w-[73px] h-[21px] bg-[#cccccc] text-[#838383] flex items-center justify-center">Apply</div>
            </div>
        </div>
    );
}

function Watermark() {
    return (
        <div className="absolute left-[1038px] top-[610px] w-[196px] h-[62px] text-[#ececec] font-['Liberation_Sans',sans-serif] font-bold text-[50px] leading-[62px] flex items-center pointer-events-none">
            <span className="w-[62px] inline-block origin-left scale-x-[0.57] tracking-[1px]">ANY</span>
            <svg viewBox="0 0 54 62" className="w-[54px] h-[62px] ml-[10px] shrink-0" fill="none" stroke="#ececec" strokeWidth="4">
                <path d="M5 2v58M13 6v50L50 31z" />
                <path d="M22 2l30 29-30 29" />
            </svg>
            <span className="w-[62px] ml-[8px] inline-block origin-left scale-x-[0.57] tracking-[1px]">RUN</span>
        </div>
    );
}

function Taskbar() {
    return (
        <div className="h-[40px] bg-[#05141f] flex items-stretch text-white">
            <div className="w-[48px] flex items-center justify-center">
                <svg viewBox="0 0 16 16" className="w-[16px] h-[16px]" fill="#fff"><path d="M0 2.200l6.500-.9v6.300H0zM7.300 1.200L16 0v7.600H7.300zM0 8.400h6.500v6.300L0 13.800zM7.300 8.400H16V16l-8.700-1.200z" /></svg>
            </div>
            <div className="w-[288px] bg-[#f2f2f2] border-t border-[#c9c9c9] flex items-center text-[#333] text-[14.800px]">
                <Search className="w-[17px] h-[17px] ml-[12px] -scale-x-100 text-[#333]" strokeWidth={1.300} />
                <span className="ml-[10px] whitespace-nowrap">Type here to search</span>
            </div>
            <div className="w-[48px] flex items-center justify-center">
                <svg viewBox="0 0 16 16" className="w-[16px] h-[16px]" fill="none" stroke="#fff"><path d="M2 1h9M2 15h9M1.500 4.500h10v7h-10zM14.500 1v2M14.500 6v2M14.500 11v4" /></svg>
            </div>
            <div className="w-[51px] flex items-center justify-center">
                <svg viewBox="0 0 26 26" className="w-[26px] h-[26px]">
                    <circle cx="13" cy="13" r="12.500" fill="#1c7ed6" />
                    <path d="M1 12C3 3 21 0 25 12c1 5-5 7-9 5 3-2 3-6-2-7C8 9 6 15 9 20c-4-1-8-4-8-8z" fill="#4fd18b" />
                    <path d="M13 25c4 0 8-2 10-5-5 2-10 1-12-3-1 3 0 7 2 8z" fill="#0c4f9e" />
                </svg>
            </div>
            <div className="w-[47px] bg-[#2f3e49] border-b-2 border-[#76b9ed] flex items-center justify-center">
                <svg viewBox="0 0 22 20" className="w-[22px] h-[20px]">
                    <path d="M1 2h8l2 2h10v14H1z" fill="#f3c851" />
                    <rect x="1" y="6" width="20" height="3" fill="#ffe59a" />
                    <rect x="7" y="12" width="8" height="6" fill="#2f88d4" />
                </svg>
            </div>
            <div className="w-[52px] flex items-center justify-center">
                <svg viewBox="0 0 26 26" className="w-[24px] h-[24px]">
                    <circle cx="13" cy="14" r="11.500" fill="#f5703a" />
                    <path d="M5 5c1 4 4 3 8 2 4-1 7 2 8 5-1-5-2-9-5-11 1 3-1 4-3 4-3 0-5 0-8 0z" fill="#fcc12e" />
                    <circle cx="13" cy="14" r="6" fill="#7a3bc8" />
                </svg>
            </div>
            <div className="w-[46px] border-b-2 border-[#76b9ed] flex items-center justify-center">
                <svg viewBox="0 0 24 24" className="w-[24px] h-[24px]">
                    <rect x="8" y="2" width="15" height="20" rx="1" fill="#1490df" />
                    <rect x="15" y="7" width="8" height="5" fill="#28a8ea" />
                    <rect x="1" y="6" width="13" height="13" rx="1" fill="#0f5ea8" />
                    <circle cx="7.500" cy="12.500" r="3.200" fill="none" stroke="#fff" strokeWidth="1.600" />
                </svg>
            </div>
            <div className="ml-auto flex items-center">
                <ChevronUp className="w-[16px] h-[16px] mr-[9px]" strokeWidth={1.200} />
                <svg viewBox="0 0 16 16" className="w-[14px] h-[16px] mr-[9px]" fill="none" stroke="#fff"><path d="M2 3a8 8 0 0 1 10 0M2 13a8 8 0 0 0 10 0M3.500 5.500h7v5h-7zM10.500 7l3.500-1.500v5L10.500 9" /></svg>
                <svg viewBox="0 0 16 16" className="w-[16px] h-[16px] mr-[7px]" fill="none" stroke="#fff"><path d="M0.500 1.500h15v9h-15M0.500 1.500v3h3v-3M3.500 10.500h8M7.500 10.500v4M4 14.500h7" /></svg>
                <svg viewBox="0 0 16 16" className="w-[16px] h-[16px]" fill="none" stroke="#fff"><path d="M1 5.500h3l4-3.500v12l-4-3.500H1zM10.500 5.500c1 1.500 1 3.500 0 5M12.500 3.500c2 3 2 6 0 9" /></svg>
                <div className="w-[56px] ml-[7px] text-center text-[11.500px] leading-[19px] whitespace-nowrap">
                    <div>2:52 PM</div>
                    <div>4/29/2025</div>
                </div>
                <div className="w-[52px] mr-[7px] flex items-center justify-center">
                    <svg viewBox="0 0 16 16" className="w-[17px] h-[16px]" fill="none" stroke="#fff"><path d="M0.500 1.500h15v10h-5l-2.500 3-2.500-3h-5z" /></svg>
                </div>
            </div>
        </div>
    );
}

export default function App() {
    return (
        <div className="relative w-[1280px] h-[720px] overflow-hidden bg-white font-['Roboto','Liberation_Sans',sans-serif]">
            <OutlookWindow />
            <ExplorerWindow />
            <PropertiesDialog />
            <Watermark />
            <Taskbar />
        </div>
    );
}
